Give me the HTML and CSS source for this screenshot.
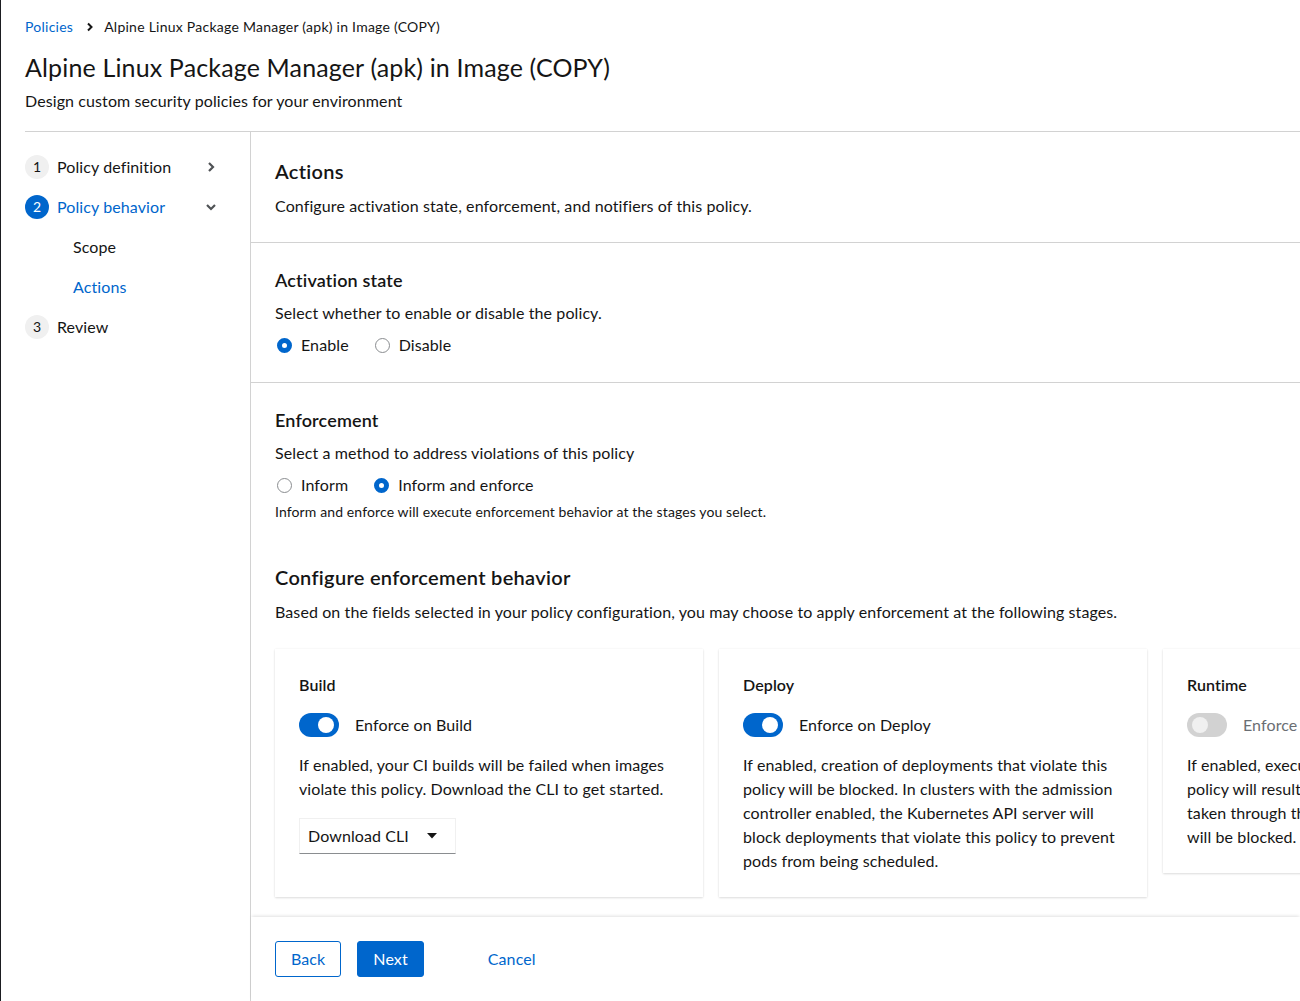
FILE: index.html
```html
<!DOCTYPE html>
<html lang="en">
<head>
<meta charset="utf-8">
<title>Alpine Linux Package Manager (apk) in Image (COPY)</title>
<link rel="stylesheet" href="styles.css">
</head>
<body>
<div class="page">
  <header class="page-header">
    <nav class="breadcrumb">
      <a class="crumb-link" href="#">Policies</a>
      <svg class="crumb-sep" width="8" height="10" viewBox="0 0 8 10"><path d="M2 1.5 L5.5 5 L2 8.5" fill="none" stroke="#151515" stroke-width="2"/></svg>
      <span class="crumb-current">Alpine Linux Package Manager (apk) in Image (COPY)</span>
    </nav>
    <h1 class="title">Alpine Linux Package Manager (apk) in Image (COPY)</h1>
    <p class="subtitle">Design custom security policies for your environment</p>
  </header>

  <div class="wizard">
    <nav class="wizard-nav">
      <ol class="nav-list">
        <li class="nav-item">
          <span class="nav-num">1</span>
          <span class="nav-text">Policy definition</span>
          <svg class="nav-chev" width="14" height="14" viewBox="0 0 14 14"><path d="M5 3 L9 7 L5 11" fill="none" stroke="#4f5255" stroke-width="2.2"/></svg>
        </li>
        <li class="nav-item is-current">
          <span class="nav-num">2</span>
          <span class="nav-text">Policy behavior</span>
          <svg class="nav-chev" width="14" height="14" viewBox="0 0 14 14"><path d="M3 5 L7 9 L11 5" fill="none" stroke="#4f5255" stroke-width="2.2"/></svg>
        </li>
        <li class="nav-sub">Scope</li>
        <li class="nav-sub is-current">Actions</li>
        <li class="nav-item">
          <span class="nav-num">3</span>
          <span class="nav-text">Review</span>
        </li>
      </ol>
    </nav>

    <div class="wizard-main">
      <div class="wizard-body">
        <section class="section bordered">
          <h2 class="h-lg">Actions</h2>
          <p class="text">Configure activation state, enforcement, and notifiers of this policy.</p>
        </section>

        <section class="section bordered activation">
          <h3 class="h-md">Activation state</h3>
          <p class="text">Select whether to enable or disable the policy.</p>
          <div class="radio-group">
            <label class="radio"><span class="radio-dot checked"></span>Enable</label>
            <label class="radio"><span class="radio-dot"></span>Disable</label>
          </div>
        </section>

        <section class="section open">
          <h3 class="h-md">Enforcement</h3>
          <p class="text">Select a method to address violations of this policy</p>
          <div class="radio-group">
            <label class="radio"><span class="radio-dot"></span>Inform</label>
            <label class="radio"><span class="radio-dot checked"></span>Inform and enforce</label>
          </div>
          <p class="helper">Inform and enforce will execute enforcement behavior at the stages you select.</p>

          <div class="configure">
            <h3 class="h-lg">Configure enforcement behavior</h3>
            <p class="text">Based on the fields selected in your policy configuration, you may choose to apply enforcement at the following stages.</p>
            <div class="cards">
              <div class="card">
                <h4 class="card-title">Build</h4>
                <div class="switch-row">
                  <span class="switch on"><span class="knob"></span></span>
                  <span class="switch-label">Enforce on Build</span>
                </div>
                <p class="text">If enabled, your CI builds will be failed when images violate this policy. Download the CLI to get started.</p>
                <div class="select">
                  <span>Download CLI</span>
                  <svg width="10" height="6" viewBox="0 0 10 6"><path d="M0 0 H10 L5 5.5 Z" fill="#151515"/></svg>
                </div>
              </div>
              <div class="card">
                <h4 class="card-title">Deploy</h4>
                <div class="switch-row">
                  <span class="switch on"><span class="knob"></span></span>
                  <span class="switch-label">Enforce on Deploy</span>
                </div>
                <p class="text">If enabled, creation of deployments that violate this policy will be blocked. In clusters with the admission controller enabled, the Kubernetes API server will block deployments that violate this policy to prevent pods from being scheduled.</p>
              </div>
              <div class="card">
                <h4 class="card-title">Runtime</h4>
                <div class="switch-row">
                  <span class="switch disabled"><span class="knob"></span></span>
                  <span class="switch-label muted">Enforce on Runtime</span>
                </div>
                <p class="text">If enabled, executions within a pod that violate this policy will result in the pod being killed. Actions<br>taken through the API server that violate this policy will be blocked.</p>
              </div>
            </div>
          </div>
        </section>
      </div>

      <footer class="wizard-footer">
        <button class="btn btn-secondary">Back</button>
        <button class="btn btn-primary">Next</button>
        <button class="btn btn-link cancel">Cancel</button>
      </footer>
    </div>
  </div>
</div>
</body>
</html>
```

FILE: styles.css
```css
* { box-sizing: border-box; }

html, body {
  margin: 0;
  height: 100%;
  overflow: hidden;
}

body {
  font-family: Lato, "Liberation Sans", sans-serif;
  color: #151515;
  background: #fff;
  border-left: 1px solid #1b1d21;
  font-size: 16px;
  line-height: 24px;
  letter-spacing: 0.1px;
}

.page {
  margin-left: 24px;
  height: 100%;
  display: flex;
  flex-direction: column;
}

/* Header */
.page-header {
  padding: 16px 0 18px;
  border-bottom: 1px solid #d2d2d2;
  flex: none;
}

.breadcrumb {
  display: flex;
  align-items: center;
  font-size: 14px;
  line-height: 21px;
  margin-bottom: 15px;
  letter-spacing: 0.25px;
}

.crumb-link {
  color: #0066cc;
  text-decoration: none;
}

.crumb-sep {
  margin: 0 10px 0 13px;
}

.title {
  margin: 0 0 7px;
  font-size: 25px;
  line-height: 30px;
  font-weight: 400;
  letter-spacing: 0.15px;
}

.subtitle {
  margin: 0;
  font-size: 16px;
  line-height: 24px;
}

/* Wizard */
.wizard {
  flex: 1;
  min-height: 0;
  display: flex;
}

.wizard-nav {
  width: 226px;
  flex: none;
  border-right: 1px solid #d2d2d2;
  padding-top: 15px;
}

.nav-list {
  list-style: none;
  margin: 0;
  padding: 0;
  width: 193px;
}

.nav-item {
  display: flex;
  align-items: center;
  height: 40px;
}

.nav-num {
  width: 24px;
  height: 24px;
  border-radius: 50%;
  background: #f0f0f0;
  color: #151515;
  font-size: 14px;
  display: flex;
  align-items: center;
  justify-content: center;
  flex: none;
  margin-right: 8px;
}

.nav-text {
  flex: 1;
}

.nav-chev {
  flex: none;
}

.nav-item.is-current .nav-num {
  background: #0066cc;
  color: #fff;
}

.nav-item.is-current .nav-text {
  color: #0066cc;
}

.nav-sub {
  height: 40px;
  display: flex;
  align-items: center;
  padding-left: 48px;
}

.nav-sub.is-current {
  color: #0066cc;
}

.wizard-main {
  flex: 1;
  min-width: 0;
  display: flex;
  flex-direction: column;
}

.wizard-body {
  flex: 1;
  min-height: 0;
  overflow: hidden;
}

.section {
  padding: 24px;
}

.section.bordered {
  border-bottom: 1px solid #d2d2d2;
}

.section.activation {
  padding-bottom: 25px;
}

.section.open {
  padding-bottom: 0;
}

.h-lg {
  margin: 0 0 8px;
  font-size: 20px;
  line-height: 30px;
  font-weight: 600;
  letter-spacing: 0.3px;
}

.h-md {
  margin: 0 0 7px;
  font-size: 18px;
  line-height: 27px;
  font-weight: 600;
  letter-spacing: 0.15px;
}

.text {
  margin: 0;
}

.radio-group {
  display: flex;
  gap: 24px;
  margin-top: 8px;
}

.radio {
  display: flex;
  align-items: center;
  gap: 9px;
  padding-left: 2px;
}

.radio-dot {
  width: 15px;
  height: 15px;
  border-radius: 50%;
  border: 1px solid #8a8d90;
  background: #fff;
  flex: none;
}

.radio-dot.checked {
  border: 5px solid #0066cc;
}

.helper {
  margin: 4px 0 0;
  font-size: 14px;
  line-height: 21px;
  letter-spacing: 0.12px;
}

.configure {
  margin-top: 40px;
}

.cards {
  display: flex;
  align-items: flex-start;
  gap: 16px;
  margin-top: 25px;
}

.card {
  width: 428px;
  flex: none;
  padding: 24px;
  background: #fff;
  box-shadow: 0 1px 2px 0 rgba(3, 3, 3, 0.12), 0 0 2px 0 rgba(3, 3, 3, 0.06);
}

.card-title {
  margin: 0 0 16px;
  font-size: 16px;
  line-height: 24px;
  font-weight: 600;
}

.switch-row {
  display: flex;
  align-items: center;
  gap: 16px;
  margin-bottom: 16px;
}

.switch {
  width: 40px;
  height: 24px;
  border-radius: 12px;
  background: #0066cc;
  position: relative;
  flex: none;
}

.knob {
  position: absolute;
  top: 4px;
  right: 5px;
  width: 16px;
  height: 16px;
  border-radius: 50%;
  background: #fff;
}

.switch.disabled {
  background: #d2d2d2;
}

.switch.disabled .knob {
  right: auto;
  left: 5px;
  background: #f0f0f0;
}

.switch-label.muted {
  color: #6a6e73;
}

.select {
  margin: 17px 0 19px;
  width: 157px;
  height: 36px;
  display: flex;
  align-items: center;
  justify-content: space-between;
  padding: 0 18px 0 8px;
  border: 1px solid #f0f0f0;
  border-bottom-color: #8a8d90;
}

/* Footer */
.wizard-footer {
  position: relative;
  flex: none;
  display: flex;
  align-items: center;
  padding: 24px;
  background: #fff;
  box-shadow: 0 -2px 3px -1px rgba(3, 3, 3, 0.12);
}

.btn {
  font-family: inherit;
  font-size: 16px;
  line-height: 24px;
  letter-spacing: 0.1px;
  padding: 5px 15px;
  border-radius: 3px;
  border: 1px solid transparent;
  background: none;
  cursor: pointer;
}

.btn-secondary {
  color: #0066cc;
  border-color: #0066cc;
  margin-right: 16px;
}

.btn-primary {
  background: #0066cc;
  border-color: #0066cc;
  color: #fff;
}

.btn-link {
  color: #0066cc;
}

.cancel {
  margin-left: 48px;
}
```
